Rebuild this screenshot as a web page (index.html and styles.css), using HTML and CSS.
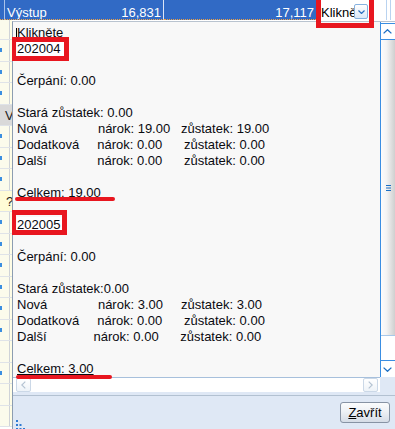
FILE: index.html
```
<!DOCTYPE html>
<html>
<head>
<meta charset="utf-8">
<link rel="stylesheet" href="styles.css">
</head>
<body>
<div class="screen">
  <div class="hdr">
    <div class="h-a"></div>
    <div class="h-b"><span>Výstup</span><span>16,831</span></div>
    <div class="h-c">17,117</div>
    <div class="h-d">
      <span class="combo-text">Klikněte</span>
      <span class="combo-btn"><svg width="7" height="4" viewBox="0 0 7 4"><path d="M0.5 0.5 L3.5 3.5 L6.5 0.5" fill="none" stroke="#2a6fc0" stroke-width="1.2"/></svg></span>
    </div>
    <div class="h-e"></div>
  </div>
  <div class="main">
    <div class="strip">
      <div class="row first"><div class="l"></div><div class="r"></div></div>
      <div class="row m"><div class="l"></div><div class="r"></div></div>
      <div class="row m"><div class="l"></div><div class="r"></div></div>
      <div class="row m"><div class="l"></div><div class="r"></div></div>
      <div class="row gray"><div class="l"><span class="cut">V</span></div></div>
      <div class="row m"><div class="l"></div><div class="r"></div></div>
      <div class="row m"><div class="l"></div><div class="r"></div></div>
      <div class="row m"><div class="l"></div><div class="r"></div></div>
      <div class="row yel"><div class="l"><span class="cut q">?</span></div></div>
      <div class="row m"><div class="l"></div><div class="r"></div></div>
      <div class="row m"><div class="l"></div><div class="r"></div></div>
      <div class="row m"><div class="l"></div><div class="r"></div></div>
      <div class="row m"><div class="l"></div><div class="r"></div></div>
      <div class="row m"><div class="l"></div><div class="r"></div></div>
      <div class="row m"><div class="l"></div><div class="r"></div></div>
      <div class="row"><div class="l"></div><div class="r"></div></div>
      <div class="row m"><div class="l"></div><div class="r"></div></div>
      <div class="row"><div class="l"></div><div class="r"></div></div>
      <div class="row"><div class="l"></div><div class="r"></div></div>
    </div>
    <div class="popup">
      <div class="pop-main">
        <div class="content">
          <div class="ln caret">Klikněte</div>
          <div class="ln"><span class="id">202004</span></div>
          <div class="ln"></div>
          <div class="ln">Čerpání: 0.00</div>
          <div class="ln"></div>
          <div class="ln">Stará zůstatek: 0.00</div>
          <div class="ln">Nová              nárok: 19.00   zůstatek: 19.00</div>
          <div class="ln">Dodatková     nárok: 0.00      zůstatek: 0.00</div>
          <div class="ln">Další              nárok: 0.00      zůstatek: 0.00</div>
          <div class="ln"></div>
          <div class="ln"><span class="u">Celkem: 19.00</span></div>
          <div class="ln"></div>
          <div class="ln"><span class="id u">202005</span></div>
          <div class="ln"></div>
          <div class="ln">Čerpání: 0.00</div>
          <div class="ln"></div>
          <div class="ln">Stará zůstatek:0.00</div>
          <div class="ln">Nová              nárok: 3.00     zůstatek: 3.00</div>
          <div class="ln">Dodatková     nárok: 0.00      zůstatek: 0.00</div>
          <div class="ln">Další             nárok: 0.00      zůstatek: 0.00</div>
          <div class="ln"></div>
          <div class="ln"><span class="u">Celkem: 3.00</span></div>
        </div>
        <div class="vscroll">
          <div class="sb-btn up"><svg width="9" height="5" viewBox="0 0 9 5"><path d="M0.6 4.4 L4.5 0.7 L8.4 4.4" fill="none" stroke="#1c6fc4" stroke-width="1.3"/></svg></div>
          <div class="thumb"><svg width="6" height="6" viewBox="0 0 6 6"><path d="M0 0.5 H5 M0 3 H5 M0 5.5 H5" stroke="#1c6fc4" stroke-width="1"/></svg></div>
          <div class="track"></div>
          <div class="sb-btn down"><svg width="9" height="5" viewBox="0 0 9 5"><path d="M0.6 0.6 L4.5 4.3 L8.4 0.6" fill="none" stroke="#1c6fc4" stroke-width="1.3"/></svg></div>
        </div>
      </div>
      <div class="pop-h">
        <div class="hscroll">
          <div class="hb"><svg width="5" height="8" viewBox="0 0 5 8"><path d="M4.3 0.6 L0.8 4 L4.3 7.4" fill="none" stroke="#b3c2d2" stroke-width="1.2"/></svg></div>
          <div class="htrack"></div>
          <div class="hb"><svg width="5" height="8" viewBox="0 0 5 8"><path d="M0.7 0.6 L4.2 4 L0.7 7.4" fill="none" stroke="#b3c2d2" stroke-width="1.2"/></svg></div>
        </div>
        <div class="corner"></div>
      </div>
      <div class="footer">
        <div class="foot-in">
          <svg class="grip" width="12" height="12" viewBox="0 0 12 12">
            <rect x="0" y="1" width="2" height="2" fill="#2f7ad2"/>
            <rect x="0" y="5" width="2" height="2" fill="#2f7ad2"/>
            <rect x="3.5" y="5" width="2" height="2" fill="#2f7ad2"/>
            <rect x="0" y="9" width="2" height="2" fill="#2f7ad2"/>
            <rect x="3.5" y="9" width="2" height="2" fill="#2f7ad2"/>
            <rect x="7" y="9" width="2" height="2" fill="#2f7ad2"/>
          </svg>
          <button class="close"><span class="u">Z</span>avřít</button>
        </div>
      </div>
    </div>
  </div>
  <div class="mark box1"></div>
  <div class="mark box2"></div>
  <div class="mark box3"></div>
  <div class="stroke s1"></div>
  <div class="stroke s2"></div>
</div>
</body>
</html>
```

FILE: styles.css
```
* { box-sizing: border-box; margin: 0; padding: 0; }
html, body { width: 395px; height: 429px; overflow: hidden; background: #fff; }
body { font-family: "Liberation Sans", Arial, sans-serif; font-size: 13px; color: #0a0a10; }
.screen { position: relative; width: 395px; height: 429px; overflow: hidden; }

/* header row */
.hdr { display: flex; height: 20px; }
.h-a, .h-b, .h-c { height: 20px; background: #316ac5; border-bottom: 1px dotted #f2a040; color: #fff; line-height: 16px; padding-top: 5px; white-space: nowrap; overflow: hidden; }
.h-a { width: 5px; border-right: 1px solid #a9c2ea; }
.h-b { width: 159px; border-right: 1px solid #dbe5f6; display: flex; justify-content: space-between; padding-left: 2px; padding-right: 2px; }
.h-c { width: 152px; text-align: right; padding-right: 2px; }
.h-d { width: 58px; height: 20px; background: #fff; display: flex; align-items: flex-start; padding-left: 5px; }
.combo-text { width: 33px; height: 20px; overflow: hidden; white-space: nowrap; padding-top: 5px; line-height: 16px; color: #000; }
.combo-btn { margin-top: 4px; width: 14px; height: 15px; border: 1px solid #86b2e0; border-radius: 2px; background: linear-gradient(#ffffff, #dbe8f7); display: flex; align-items: center; justify-content: center; }
.h-e { width: 21px; height: 20px; background: linear-gradient(to right, #fff 12px, #b9d3f0 12px, #b9d3f0 13px, #fff 13px, #fff 16px, #b9d3f0 16px, #b9d3f0 17px, #fff 17px); }

.main { display: flex; height: 409px; }

/* left strip of underlying grid */
.strip { width: 12px; display: flex; flex-direction: column; overflow: hidden; flex: none; }
.row { height: 21.5px; flex: none; display: flex; border-bottom: 1px solid #dfe3e8; position: relative; }
.row.first { height: 20px; }
.row .l { width: 9px; background: #fbfbec; position: relative; overflow: hidden; }
.row .r { width: 3px; border-left: 1px solid #cfd3d8; background: #fffde6; }
.row.m .l::before { content: ""; position: absolute; left: 0; top: 8px; width: 2px; height: 4px; background: #3a8ee0; }
.row.gray .l, .row.yel .l { width: 12px; }
.row.gray .l { background: #d9d9d9; }
.row.yel .l { background: #fffcd6; }
.cut { position: absolute; left: 5px; top: 3px; line-height: 16px; color: #222; }
.cut.q { left: 6px; }

/* popup */
.popup { width: 383px; flex: none; margin-top: 1px; border-top: 1px solid #b9c3cf; border-left: 1px solid #8c9db1; display: flex; flex-direction: column; }
.pop-main { display: flex; height: 355px; }
.content { flex: 1; background: #f8f8f8; padding: 3px 0 0 4px; overflow: hidden; }
.ln { height: 16px; line-height: 16px; white-space: pre; }
.caret { position: relative; }
.caret::before { content: ""; position: absolute; left: -1px; top: 3px; height: 12px; border-left: 1px solid #000; }
.u { text-decoration: underline; }
.id { background: #fff; padding-right: 4px; }

.vscroll { width: 15px; border-left: 1px solid #3a8ee2; display: flex; flex-direction: column; padding-top: 1px; background: #fff; flex: none; }
.sb-btn { height: 17px; display: flex; align-items: center; justify-content: center; background: #fff; padding-right: 1px; }
.sb-btn.up { border-top: 1px solid #3a8ee2; border-bottom: 1px solid #3a8ee2; }
.sb-btn.down { border-top: 1px solid #3a8ee2; }
.thumb { height: 296px; background: linear-gradient(to right, #fcfcfc 0%, #f3f3f3 40%, #cfcfcf 100%); border-bottom: 1px solid #a8c8ea; display: flex; align-items: center; justify-content: center; padding-left: 1px; }
.track { height: 24px; background: #fff; }

.pop-h { display: flex; height: 15px; flex: none; }
.hscroll { flex: 1; border-top: 1px solid #a7c0dc; background: #fff; display: flex; padding-left: 3px; padding-right: 2px; }
.hb { width: 15px; height: 14px; border: 1px solid #cbd8e7; border-radius: 2px; background: linear-gradient(#ffffff, #eef3f8); display: flex; align-items: center; justify-content: center; }
.htrack { flex: 1; }
.corner { width: 15px; background: #dfe8f5; }

.footer { flex: 1; background: #dfe8f5; padding-top: 3px; }
.foot-in { height: 100%; border-top: 1px solid #b3c1d1; display: flex; align-items: flex-start; padding: 6px 5px 0 3px; }
.grip { margin-top: 17px; }
.close { margin-left: auto; width: 50px; height: 21px; border: 1px solid #8793a4; border-radius: 3px; background: linear-gradient(#fbfcfd 0%, #eef1f5 45%, #d5dce6 100%); font-family: "Liberation Sans", Arial, sans-serif; font-size: 13px; line-height: 19px; color: #000; }

/* red annotation marks drawn over the screenshot */
.mark { position: absolute; border: 5px solid #e8161f; }
.box1 { left: 12px; top: 37px; width: 57px; height: 24px; border-left-width: 4px; }
.box2 { left: 12px; top: 210px; width: 55px; height: 25px; border-left-width: 4px; }
.box3 { left: 316px; top: -5px; width: 58px; height: 33px; }
.stroke { position: absolute; height: 4px; background: #e8161f; border-radius: 2px; }
.s1 { left: 15px; top: 197px; width: 100px; }
.s2 { left: 16px; top: 375px; width: 96px; }
```
